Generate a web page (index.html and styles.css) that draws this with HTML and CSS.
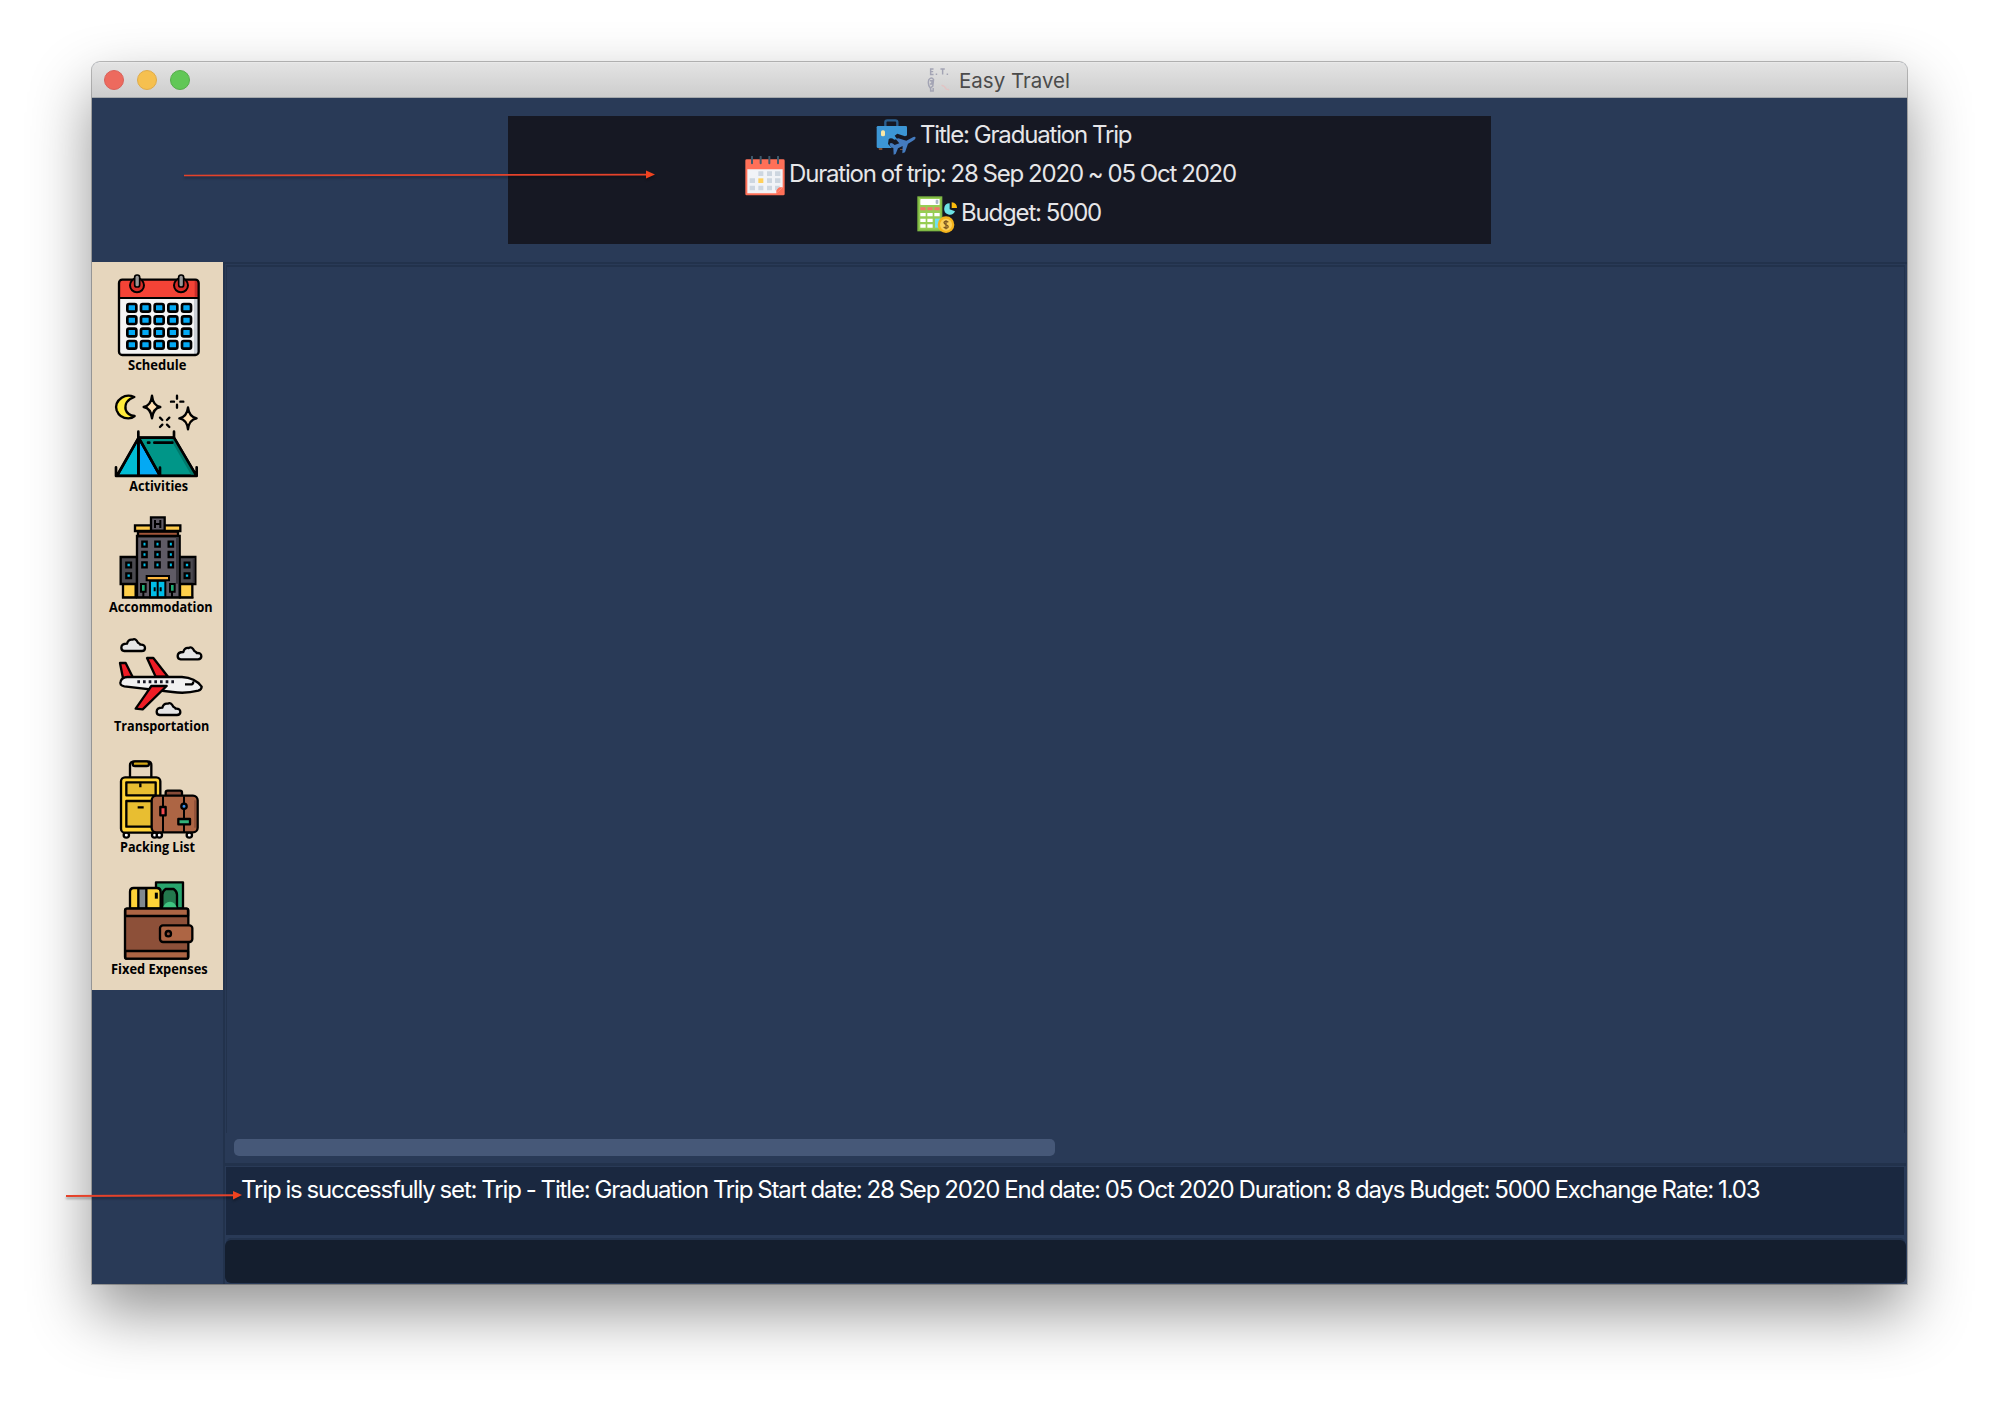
FILE: index.html
```html
<!DOCTYPE html>
<html lang="en">
<head>
<meta charset="utf-8">
<title>Easy Travel</title>
<link rel="stylesheet" href="styles.css">
</head>
<body>
<div class="window">
  <header class="titlebar">
    <span class="lights"><i class="light red"></i><i class="light yellow"></i><i class="light green"></i></span>
    <svg class="app-icon" viewBox="0 0 66 66"><g fill="none" stroke="#a3a4b4" stroke-width="4"><path d="M18 3H10v15h8M10 10h7M37 3h12M43 3v15"/><path d="M5 32q8-9 13 0l-2 18-7 5q-8-9-4-23zM8 35h6l-1 9H8M10 55v8h7v-8"/></g><path d="M24 15h4v4h-4zM54 15h4v4h-4z" fill="#a3a4b4"/><path d="M40 47l8 4 5 7 8 2" fill="none" stroke="#e2c4c4" stroke-width="4"/></svg>
    <span class="title">Easy Travel</span>
  </header>
  <section class="trip">
    <div class="trip-card">
      <div class="trip-row row-title">
        <svg class="trip-icon" viewBox="0 0 120 120"><path d="M28 23V10q0-6 6-6h24q6 0 6 6v13" fill="none" stroke="#2a5e8e" stroke-width="7"/><path d="M7 84h12v9H9zM72 84h12v9H72z" fill="#7d4d32"/><rect x="2" y="21" width="91" height="66" rx="4" fill="#3c96d5"/><rect x="15" y="34" width="12" height="18" rx="5" fill="#f8e8a7"/><path d="M38 61q6-7 17 1l8-2-7-10 8-6 23 8 9-4v42H51L36 75z" fill="#161823"/><path d="M41 66q5-5 15 4l14-5-11-13 8-2 24 7 17-9q9-5 11 0 0 5-8 9L96 66l-9 26-8 3 1-22-14 7-7 17-6 2-1-20q-11-3-11-13z" transform="translate(0 8)" fill="#447bbf"/></svg>
        <span>Title: Graduation Trip</span>
      </div>
      <div class="trip-row row-dates">
        <svg class="trip-icon" viewBox="0 0 120 120"><rect x="1" y="10" width="118" height="108" rx="4" fill="#ff7058"/><path d="M7 40h106v54L94 112H7z" fill="#f1f3f7"/><path d="M94 112V94h19z" fill="#ff7058"/><g fill="#cdd6e0"><path d="M40 46h15v14H40zM66 46h15v14H66zM90 46h16v14H90zM14 67h16v14H14zM66 67h15v14H66zM90 67h16v14H90zM14 89h16v14H14zM40 89h15v14H40zM66 89h15v14H66zM90 89h16l-12 14h-4z"/></g><path d="M40 67h15v14H40z" fill="#ffd05b"/><path d="M21 2v20M47 2v20M73 2v20M99 2v20" stroke="#40596b" stroke-width="6" stroke-linecap="round"/></svg>
        <span>Duration of trip: 28 Sep 2020 ~ 05 Oct 2020</span>
      </div>
      <div class="trip-row row-budget">
        <svg class="trip-icon" viewBox="0 0 120 120"><rect x="1" y="4" width="75" height="105" fill="#7fb944"/><rect x="6" y="9" width="65" height="95" fill="#97cd54"/><rect x="10" y="12" width="58" height="18" rx="2" fill="#fff"/><rect x="56" y="14" width="8" height="13" rx="3" fill="#a9b5c4"/><path d="M10 37h16v9H10zM31 37h16v9H31zM52 37h16v9H52z" fill="#f2786b"/><path d="M10 54h16v10H10zM31 54h16v10H31zM52 54h16v10H52zM10 71h16v10H10zM31 71h16v10H31zM10 88h16v10H10zM31 88h16v10H31z" fill="#fff"/><path d="M54 71h16v27H54z" fill="#6fdff0"/><path d="M98 43V25a17 17 0 1 0 16 24z" fill="#6de2e5"/><path d="M104 39V22q16 2 16 17z" fill="#fdbc0b"/><circle cx="87" cy="89" r="25" fill="#f4b31b"/><circle cx="87" cy="89" r="18" fill="#fcd15a"/><path d="M94 82q-9-7-13 0 0 5 6 7 8 3 6 8-5 6-13-1M87 76v27" fill="none" stroke="#7c5723" stroke-width="4"/></svg>
        <span>Budget: 5000</span>
      </div>
    </div>
  </section>
  <main class="main">
    <nav class="sidebar">
      <svg class="nav-item" viewBox="6 6 393 364"><rect x="87" y="59" width="239" height="226" rx="10" fill="#f4f4f4"/><path d="M312 116h13v166h-13z" fill="#cbd0d6"/><path d="M88 113V69q0-10 10-10h218q10 0 10 10v44z" fill="#f44336"/><path d="M314 62h10v48h-10z" fill="#c82d2a"/><rect x="87" y="59" width="239" height="226" rx="10" fill="none" stroke="#000" stroke-width="7"/><path d="M88 114h238" stroke="#000" stroke-width="6"/><g fill="#d52c27" stroke="#000" stroke-width="6"><circle cx="141" cy="76" r="21"/><circle cx="273" cy="76" r="21"/></g><g fill="#999" stroke="#000" stroke-width="5"><rect x="134" y="45" width="15" height="36" rx="7"/><rect x="266" y="45" width="15" height="36" rx="7"/></g>
        <g fill="#03a9f4" stroke="#000" stroke-width="8"><g id="days"><rect x="112" y="132" width="27" height="23" rx="5"/><rect x="153" y="132" width="27" height="23" rx="5"/><rect x="194" y="132" width="27" height="23" rx="5"/><rect x="235" y="132" width="27" height="23" rx="5"/><rect x="276" y="132" width="27" height="23" rx="5"/></g><use href="#days" y="37"/><use href="#days" y="74"/><use href="#days" y="111"/></g>
        <text x="114" y="330" textLength="175" lengthAdjust="spacingAndGlyphs">Schedule</text></svg>
      <svg class="nav-item" viewBox="6 370 393 364"><g stroke="#000" stroke-width="7" stroke-linejoin="round" stroke-linecap="round"><path d="M133 412q-21-9-38 2-22 15-15 38 9 24 35 24 11 0 19-7-22-2-27-19-5-27 26-38z" fill="#ffeb3b"/><path d="M186 408q3 30 25 34-22 4-25 34-3-30-25-34 22-4 25-34zM294 443q3 28 26 33-23 4-26 33-3-29-26-33 23-5 26-33z" fill="#ffe0b2"/><path d="M261 408v9M261 435v9M243 426h9M271 426h9M210 474l7 7M231 495l7 7M238 474l-7 7M217 495l-7 7" fill="none"/><path d="M146 534L82 648h64z" fill="#00bcd4"/><path d="M146 534v114h64z" fill="#03a9f4"/><path d="M146 534h106l67 114H210z" fill="#009688"/><path d="M252 537l66 110h-14l-61-106z" fill="#00796b" stroke="none"/><path d="M145 516v132M252 516v18M78 623v26h242v-26M210 624v24M146 534l64 114M146 534h106l67 114M146 534L82 646M174 549h4M193 549h54" fill="none" stroke-width="8"/></g><text x="118" y="695" textLength="176" lengthAdjust="spacingAndGlyphs">Activities</text></svg>
      <svg class="nav-item" viewBox="6 14 393 364"><g stroke="#000" stroke-width="7"><path d="M99 250h38v41H99zM270 250h37v41h-37z" fill="#ffd04b"/><path d="M92 170h49v81H92zM266 170h50v81h-50z" fill="#4b4a50"/><path d="M141 107h128v184H141z" fill="#5f5b65"/><path d="M144 94h120v13H144z" fill="#a15539"/><path d="M135 75h136v17H135z" fill="#ffcb4b"/><path d="M183 51h41v40h-41z" fill="#5f5b65"/></g><path d="M195 59v24M211 59v24M195 71h16" stroke="#000" stroke-width="6"/><path d="M258 110h8v140h-8zM308 173h6v75h-6z" fill="#39373e"/><g fill="#00bde7" stroke="#000" stroke-width="7"><g id="floor"><path d="M157 124h13v15h-13zM196 124h13v15h-13zM236 124h13v15h-13z"/></g><use href="#floor" y="31"/><use href="#floor" y="62"/><path d="M109 187h14v14h-14zM109 219h14v14h-14zM284 187h14v14h-14zM284 219h14v14h-14z"/></g><g stroke="#000" stroke-width="6"><path d="M180 241h46v50h-46z" fill="#00bde7"/><path d="M203 241v50M160 275v16M246 275v16"/><path d="M170 227h67v13h-67z" fill="#ffb83e"/><path d="M153 251h14v23h-14zM240 251h14v23h-14z" fill="#20ab75"/></g><path d="M191 261h6v12h-6zM209 261h6v12h-6z"/><path d="M96 292h214" stroke="#000" stroke-width="5"/><text x="57" y="335" textLength="311" lengthAdjust="spacingAndGlyphs">Accommodation</text></svg>
      <svg class="nav-item" viewBox="6 378 393 364"><g stroke="#000" stroke-width="7" stroke-linejoin="round"><g fill="#e6e6e6"><path id="cloud" d="M103 453q-9-1-9-10 0-12 17-12 4-14 16-12 10-6 17 9 7 4 7 6 14-1 14 10 0 9-10 9z"/><use href="#cloud" x="169" y="25"/><use href="#cloud" x="106" y="192"/></g><path d="M171 474h19l44 56h-37z" fill="#ef1c25"/><path d="M99 535l-9-46h17l21 42z" fill="#ef1c25"/><path d="M92 544q4-12 20-13h164q39 2 59 29 0 8-10 12-39 10-77 4l-145-17q-16-3-11-15z" fill="#f1f1f1"/><path d="M184 558h46l-72 70-21-2 32-46z" fill="#ef1c25"/><path d="M285 553h21q5-3 3-9" fill="none"/></g><path d="M142 545h110" stroke="#171724" stroke-width="9" stroke-dasharray="8 9"/><text x="72" y="693" textLength="286" lengthAdjust="spacingAndGlyphs">Transportation</text></svg>
      <svg class="nav-item" viewBox="6 22 393 364"><g stroke="#000" stroke-width="7" stroke-linejoin="round"><path d="M120 112V76q0-8 8-10h50q6 2 6 10v36" fill="none"/><rect x="128" y="65" width="49" height="14" rx="7" fill="#d5a817"/><g fill="#fff"><circle cx="109" cy="286" r="8"/><circle cx="194" cy="286" r="8"/></g><rect x="93" y="113" width="118" height="166" rx="12" fill="#ffd338"/><path d="M109 128h88v39h-88zM109 184h88v77h-88z" fill="#e8be31"/><path d="M151 131v12M143 203h18" stroke-width="7"/><rect x="227" y="153" width="49" height="18" rx="6" fill="#874b38"/><g fill="#fff"><circle cx="208" cy="286" r="8"/><circle cx="298" cy="286" r="8"/></g><rect x="185" y="168" width="138" height="110" rx="14" fill="#ad6544"/><path d="M219 170v108M282 170v108" stroke-width="6"/><path d="M211 202h16v25h-16z" fill="#f34b50"/><circle cx="282" cy="200" r="8" fill="#3c8fe9"/><path d="M265 238h35v16h-35z" fill="#33b27b"/></g><path d="M315 182v82" stroke="#8e4f38" stroke-width="5"/><text x="90" y="338" textLength="225" lengthAdjust="spacingAndGlyphs">Packing List</text></svg>
      <svg class="nav-item" viewBox="6 386 393 364"><g stroke="#000" stroke-width="7" stroke-linejoin="round"><path d="M198 426h81v79h-81z" fill="#28a46d"/><path d="M217 505v-42q0-10 10-17h24q10 7 10 17v42z" fill="#23784d"/><path d="M218 505q6-21 22-21t21 21z" fill="#3fc480" stroke="none"/><path d="M120 505v-51q0-11 11-11h70q11 0 11 11v51z" fill="#ffd338"/><path d="M145 444h24v61h-24z" fill="#808990"/><path d="M199 457v18" stroke-width="9"/><rect x="105" y="505" width="190" height="150" rx="6" fill="#8d5039"/><path d="M106 527v-17q0-5 5-5h178q5 0 5 5v17zM106 632h188v18q0 5-5 5H111q-5 0-5-5z" fill="#ad6544"/><rect x="210" y="555" width="97" height="50" rx="9" fill="#ad6544"/><circle cx="235" cy="580" r="8" fill="#8d5039"/></g><text x="63" y="702" textLength="290" lengthAdjust="spacingAndGlyphs">Fixed Expenses</text></svg>
    </nav>
    <div class="content">
      <div class="list-pane"><div class="list-view"></div><div class="scrollbar"></div></div>
      <div class="result">Trip is successfully set: Trip - Title: Graduation Trip Start date: 28 Sep 2020 End date: 05 Oct 2020 Duration: 8 days Budget: 5000 Exchange Rate: 1.03</div>
      <div class="command"></div>
    </div>
  </main>
</div>
<svg class="arrow arrow-trip" viewBox="0 0 472 14"><path d="M0 7.5L464 6.7" stroke="#e5422a" stroke-width="1.7"/><path d="M462 2.5l9 4-9 4z" fill="#f0431f"/></svg>
<svg class="arrow arrow-result" viewBox="0 0 176 14"><path d="M0 8L168 7.3" stroke="#e5422a" stroke-width="1.9"/><path d="M167 3l9 4-9 4.5z" fill="#f0431f"/></svg>
</body>
</html>
```
FILE: styles.css
```css
* { box-sizing: border-box; }
body {
  margin: 0;
  padding: 62px 92px 0;
  width: 1999px;
  height: 1406px;
  overflow: hidden;
  position: relative;
  background: #fff;
  font-family: Inter, "Liberation Sans", sans-serif;
}
.window {
  width: 1815px;
  height: 1222px;
  display: flex;
  flex-direction: column;
  background: #293a57;
  border-radius: 8px 8px 0 0;
  box-shadow: 0 0 0 1px rgba(0, 0, 0, .26), 0 28px 62px rgba(0, 0, 0, .43);
}
.titlebar {
  flex: none;
  height: 36px;
  position: relative;
  display: flex;
  justify-content: center;
  align-items: center;
  gap: 8px;
  padding-right: 2px;
  border-radius: 7px 7px 0 0;
  border-top: 1px solid #e9e9e9;
  border-bottom: 1px solid #a4a8ab;
  background: linear-gradient(#e3e3e3, #cdcdcd);
}
.lights { position: absolute; left: 12px; top: 7px; display: flex; gap: 13px; }
.light { width: 20px; height: 20px; border-radius: 50%; border: 1px solid; }
.red { background: #ed6a5e; border-color: #d9615a; }
.yellow { background: #f6c04f; border-color: #dfab4b; }
.green { background: #61c756; border-color: #56ad4b; }
.app-icon { width: 24px; height: 24px; }
.title { font-size: 20.5px; line-height: 24px; padding-top: 2px; color: #4b4b4b; white-space: nowrap; }
.trip { flex: none; height: 164px; padding: 18px 416px; }
.trip-card { height: 128px; width: 983px; background: #161823; padding-top: 1px; }
.trip-row {
  height: 39.4px;
  display: flex;
  align-items: center;
  gap: 4px;
  font-size: 24px;
  line-height: 30px;
  letter-spacing: -1.18px;
  word-spacing: -.6px;
  color: #e6e6e8;
  white-space: nowrap;
}
.row-title { padding-left: 368px; }
.row-dates { padding-left: 237px; }
.row-budget { padding-left: 409px; }
.trip-icon { width: 40px; height: 40px; flex: none; margin-top: 4px; }
.row-dates .trip-icon, .row-budget .trip-icon { margin-top: 0; }
.trip-row span { margin-top: -4px; }
.main { flex: 1; min-height: 0; display: flex; }
.sidebar { width: 131px; height: 728px; background: #e6d6bd; display: flex; flex-direction: column; }
.nav-item { width: 131px; height: 121.33px; flex: none; display: block; }
.nav-item text { font: 700 43px "Open Sans", "Noto Sans", sans-serif; fill: #000; }
.content {
  flex: 1;
  display: flex;
  flex-direction: column;
  border: 2px solid #22324c;
  border-right: 0;
  border-bottom: 0;
  padding-right: 1px;
}
.list-pane { flex: none; height: 902px; padding: 1px 1px 0 1px; border-bottom: 3px solid #22324c; }
.list-view { height: 868px; border: 1px solid #22324c; border-top-width: 2px; border-bottom: 0; }
.scrollbar { width: 821px; height: 17px; margin: 6px 0 0 8px; border-radius: 5px; background: #465878; }
.result {
  flex: none;
  height: 68px;
  margin: 1px 2px 0 1px;
  padding: 5px 0 0 15px;
  background: #1a2840;
  color: #fff;
  font-size: 24px;
  line-height: 36px;
  letter-spacing: -1.16px;
  word-spacing: -.6px;
  white-space: nowrap;
}
.command {
  flex: none;
  height: 43px;
  margin-top: 5px;
  border-radius: 6px;
  background: #141e2e;
  box-shadow: 0 -3px 0 -1px #22324c;
}
.arrow { position: absolute; overflow: visible; filter: drop-shadow(0 2px 1px rgba(0, 0, 0, .3)); }
.arrow-trip { left: 184px; top: 168px; width: 472px; height: 14px; }
.arrow-result { left: 66px; top: 1188px; width: 176px; height: 14px; }
```
